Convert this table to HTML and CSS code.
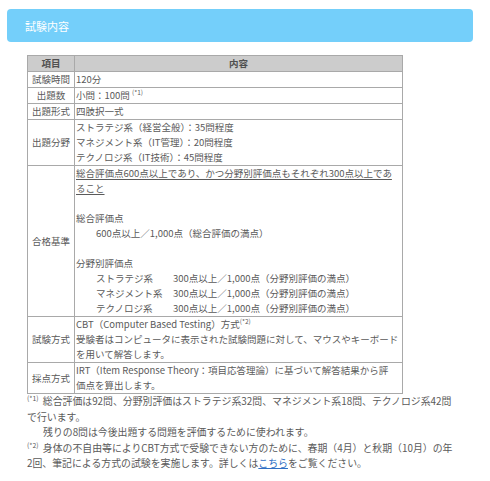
FILE: index.html
```html
<!DOCTYPE html>
<html lang="ja">
<head>
<meta charset="utf-8">
<link rel="stylesheet" href="styles.css">
</head>
<body>
<div class="page">
  <h2 class="bar">試験内容</h2>
  <div class="content">
    <table class="exam">
      <thead>
        <tr><th class="col-item">項目</th><th>内容</th></tr>
      </thead>
      <tbody>
        <tr><td class="label">試験時間</td><td>120分</td></tr>
        <tr><td class="label">出題数</td><td>小問：100問 <sup class="note-ref">(*1)</sup></td></tr>
        <tr><td class="label">出題形式</td><td>四肢択一式</td></tr>
        <tr><td class="label">出題分野</td><td>
          <div>ストラテジ系（経営全般）：35問程度</div>
          <div>マネジメント系（IT管理）：20問程度</div>
          <div>テクノロジ系（IT技術）：45問程度</div>
        </td></tr>
        <tr><td class="label">合格基準</td><td>
          <div class="underline">総合評価点600点以上であり、かつ分野別評価点もそれぞれ300点以上であ<br>ること</div>
          <div class="block">総合評価点</div>
          <div class="indent">600点以上／1,000点（総合評価の満点）</div>
          <div class="block">分野別評価点</div>
          <div class="score-grid">
            <span>ストラテジ系</span><span>300点以上／1,000点（分野別評価の満点）</span>
            <span>マネジメント系</span><span>300点以上／1,000点（分野別評価の満点）</span>
            <span>テクノロジ系</span><span>300点以上／1,000点（分野別評価の満点）</span>
          </div>
        </td></tr>
        <tr><td class="label">試験方式</td><td>
          <div>CBT（Computer Based Testing）方式<sup class="note-ref">(*2)</sup></div>
          <div>受験者はコンピュータに表示された試験問題に対して、マウスやキーボード<br>を用いて解答します。</div>
        </td></tr>
        <tr><td class="label">採点方式</td><td>IRT（Item Response Theory：項目応答理論）に基づいて解答結果から評<br>価点を算出します。</td></tr>
      </tbody>
    </table>
    <div class="notes">
      <p><sup class="note-mark">(*1)</sup> 総合評価は92問、分野別評価はストラテジ系32問、マネジメント系18問、テクノロジ系42問<br>で行います。</p>
      <p class="note-indent">残りの8問は今後出題する問題を評価するために使われます。</p>
      <p><sup class="note-mark">(*2)</sup> 身体の不自由等によりCBT方式で受験できない方のために、春期（4月）と秋期（10月）の年<br>2回、筆記による方式の試験を実施します。詳しくは<a href="#" class="link">こちら</a>をご覧ください。</p>
    </div>
  </div>
</div>
</body>
</html>
```

FILE: styles.css
```css
html, body {
  margin: 0;
  padding: 0;
  background: #ffffff;
}
body {
  font-family: "Noto Sans CJK JP", "Noto Sans", sans-serif;
  color: #5a5a5a;
}
.page {
  width: 466px;
  margin: 9px 0 0 7px;
}
.bar {
  margin: 0;
  height: 33px;
  box-sizing: border-box;
  padding: 0 18px;
  display: flex;
  align-items: center;
  background: #74cffa;
  border-radius: 4px;
  color: #ffffff;
  font-size: 11px;
  font-weight: normal;
}
.content {
  padding: 13px 0 0 20px;
}
.exam {
  width: 376px;
  border-collapse: collapse;
  font-size: 9.5px;
  line-height: 15px;
}
.exam th,
.exam td {
  border: 1px solid #a9a9a9;
  padding: 0 1px;
  vertical-align: middle;
  white-space: nowrap;
}
.exam th {
  background: #cccccc;
  color: #505050;
  font-weight: bold;
  text-align: center;
}
.exam .col-item {
  width: 44px;
}
.exam td.label {
  text-align: center;
  padding: 0 2px;
}
.note-ref {
  font-size: 6.5px;
  line-height: 0;
  vertical-align: 4px;
}
.underline {
  text-decoration: underline;
  text-underline-offset: 2px;
}
.block {
  margin-top: 15px;
}
.indent {
  padding-left: 20px;
}
.score-grid {
  display: grid;
  grid-template-columns: 77px auto;
  padding-left: 20px;
}
.notes {
  width: 450px;
  font-size: 9.9px;
  line-height: 15.5px;
  white-space: nowrap;
}
.notes p {
  margin: 0;
}
.note-mark {
  font-size: 6.8px;
  line-height: 0;
  vertical-align: 4px;
  margin-right: 2px;
}
.note-indent {
  padding-left: 16px;
}
.link {
  color: #2f6fc4;
  text-decoration: underline;
}
```
